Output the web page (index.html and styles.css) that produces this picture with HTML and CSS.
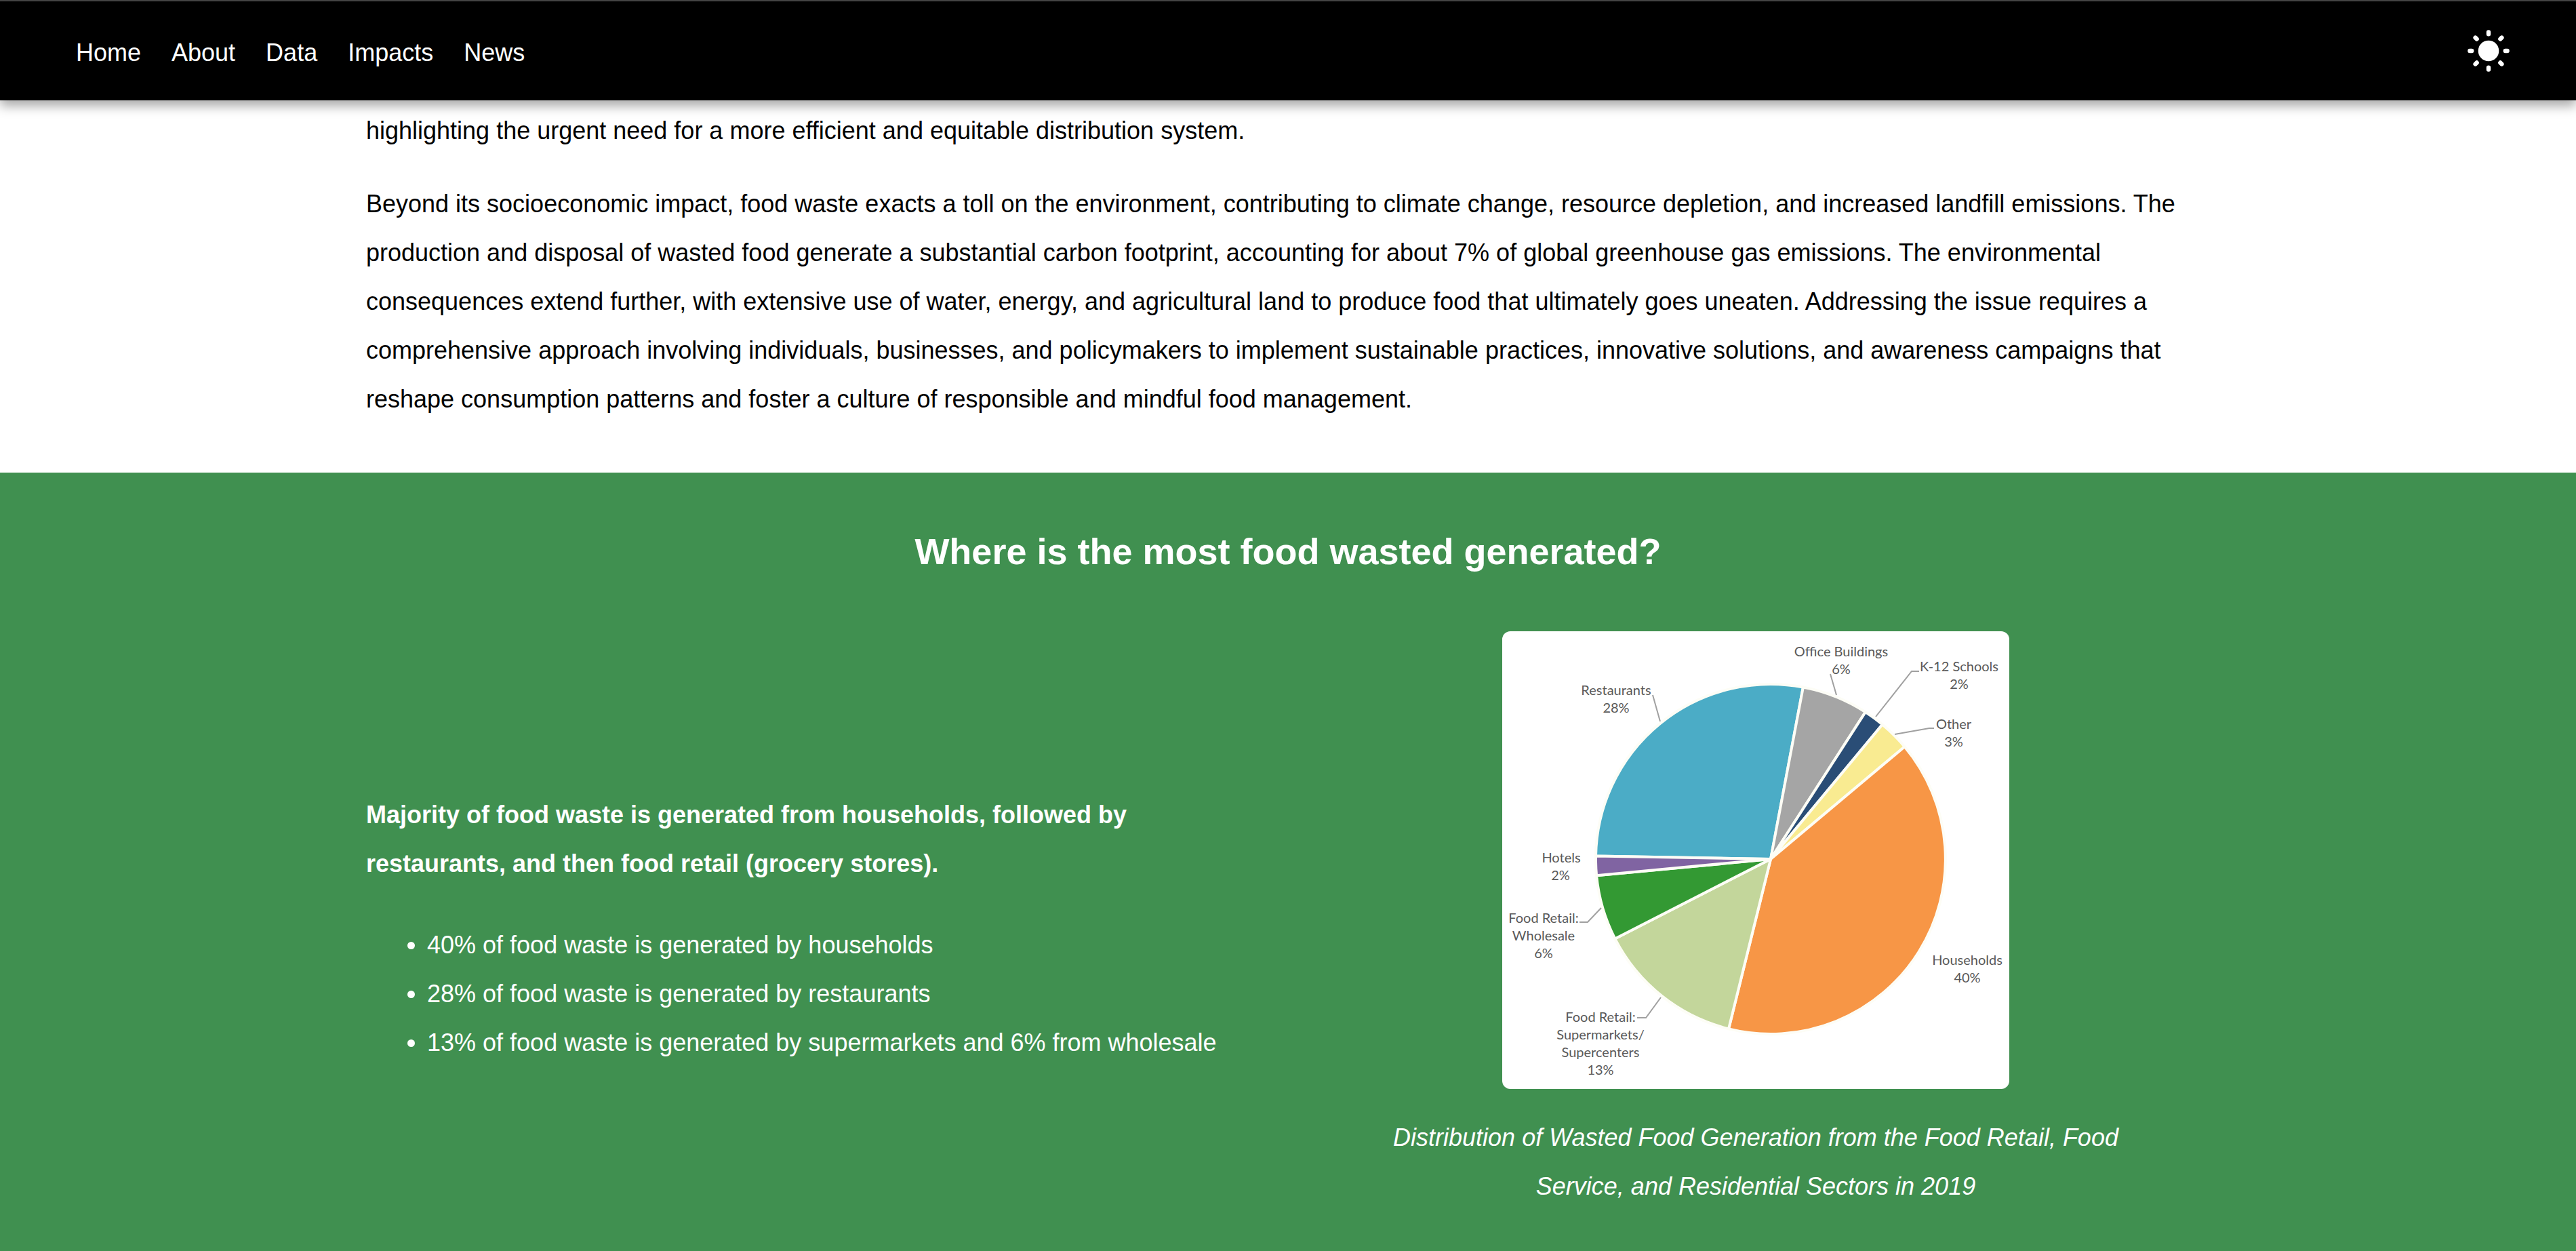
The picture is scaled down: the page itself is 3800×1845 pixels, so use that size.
FILE: index.html
```html
<!DOCTYPE html>
<html lang="en">
<head>
<meta charset="utf-8">
<title>Food Waste</title>
<link rel="stylesheet" href="styles.css">
</head>
<body>
<header class="site-header">
  <nav class="nav">
    <a href="#home">Home</a>
    <a href="#about">About</a>
    <a href="#data">Data</a>
    <a href="#impacts">Impacts</a>
    <a href="#news">News</a>
  </nav>
  <button class="theme-toggle" type="button" aria-label="Toggle theme">
    <svg viewBox="-36 -36 72 72" aria-hidden="true">
      <circle r="15.3" fill="#fff"/>
      <g stroke="#fff" stroke-width="6.4" stroke-linecap="round">
        <path d="M0-24.8V-27.6M0 24.8V27.6M-24.8 0H-27.6M24.8 0H27.6"/>
        <path d="M-17.4-17.4L-19.4-19.4M17.4-17.4L19.4-19.4M-17.4 17.4L-19.4 19.4M17.4 17.4L19.4 19.4"/>
      </g>
    </svg>
  </button>
</header>
<main>
  <section class="about" id="about">
    <p>highlighting the urgent need for a more efficient and equitable distribution system.</p>
    <p>Beyond its socioeconomic impact, food waste exacts a toll on the environment, contributing to climate change, resource depletion, and increased landfill emissions. The production and disposal of wasted food generate a substantial carbon footprint, accounting for about 7% of global greenhouse gas emissions. The environmental consequences extend further, with extensive use of water, energy, and agricultural land to produce food that ultimately goes uneaten. Addressing the issue requires a comprehensive approach involving individuals, businesses, and policymakers to implement sustainable practices, innovative solutions, and awareness campaigns that reshape consumption patterns and foster a culture of responsible and mindful food management.</p>
  </section>
  <section class="data" id="data">
    <h2>Where is the most food wasted generated?</h2>
    <div class="columns">
      <div class="summary">
        <p>Majority of food waste is generated from households, followed by restaurants, and then food retail (grocery stores).</p>
        <ul>
          <li>40% of food waste is generated by households</li>
          <li>28% of food waste is generated by restaurants</li>
          <li>13% of food waste is generated by supermarkets and 6% from wholesale</li>
        </ul>
      </div>
      <figure class="chart">
        <svg viewBox="0 0 748 675" role="img" aria-label="Wasted food by sector">
          <g class="slices">
            <path fill="#4bacc6" d="M396 336L138 331.5A258 258 0 0 1 443.9 82.5Z"/>
            <path fill="#a5a5a5" d="M396 336L443.9 82.5A258 258 0 0 1 535.8 119.1Z"/>
            <path fill="#2a4d76" d="M396 336L535.8 119.1A258 258 0 0 1 560.8 137.5Z"/>
            <path fill="#f9eb91" d="M396 336L560.8 137.5A258 258 0 0 1 593.6 170.2Z"/>
            <path fill="#f79646" d="M396 336L593.6 170.2A258 258 0 0 1 334 586.4Z"/>
            <path fill="#c3d69b" d="M396 336L334 586.4A258 258 0 0 1 166.3 453.5Z"/>
            <path fill="#339933" d="M396 336L166.3 453.5A258 258 0 0 1 139.1 360.3Z"/>
            <path fill="#8064a2" d="M396 336L139.1 360.3A258 258 0 0 1 138 331.5Z"/>
          </g>
          <path class="leaders" d="M222 94L233 133M114 429H126L146 408M199 570H212L234 540M484 63L493 94M615 59H604L551 126M637 143H630L579 152"/>
          <g class="labels">
            <text x="168" y="94">Restaurants</text><text x="168" y="120">28%</text>
            <text x="500" y="37">Office Buildings</text><text x="500" y="63">6%</text>
            <text x="674" y="59">K-12 Schools</text><text x="674" y="85">2%</text>
            <text x="666" y="144">Other</text><text x="666" y="170">3%</text>
            <text x="686" y="492">Households</text><text x="686" y="518">40%</text>
            <text x="87" y="341">Hotels</text><text x="86" y="367">2%</text>
            <text x="61" y="430">Food Retail:</text><text x="61" y="456">Wholesale</text><text x="61" y="482">6%</text>
            <text x="145" y="576">Food Retail:</text><text x="145" y="602">Supermarkets/</text><text x="145" y="628">Supercenters</text><text x="145" y="654">13%</text>
          </g>
        </svg>
        <figcaption>Distribution of Wasted Food Generation from the Food Retail, Food Service, and Residential Sectors in 2019</figcaption>
      </figure>
    </div>
  </section>
</main>
</body>
</html>
```
FILE: styles.css
```css
* { box-sizing: border-box; }

body {
  margin: 0;
  min-height: 100vh;
  display: flex;
  flex-direction: column;
  background: #fff;
  color: #000;
  font: 36px/72px "Liberation Sans", Arial, sans-serif;
}

h2, p, ul, figure { margin: 0; }

.site-header {
  position: sticky;
  top: 0;
  z-index: 1;
  display: flex;
  justify-content: space-between;
  align-items: center;
  height: 148px;
  padding: 6px 93px 0 112px;
  background: #000;
  border-top: 2px solid #444;
  box-shadow: 0 8px 16px rgba(0, 0, 0, 0.35);
}

.nav { display: flex; gap: 45px; }
.nav a { color: #fff; text-decoration: none; }

.theme-toggle {
  width: 72px;
  height: 72px;
  margin-bottom: 6px;
  padding: 0;
  border: 0;
  background: none;
  cursor: pointer;
}
.theme-toggle svg { display: block; width: 100%; }

main { flex: 1; display: flex; flex-direction: column; }

.about {
  display: grid;
  gap: 36px;
  padding: 9px 540px 72px;
}

.data {
  flex: 1;
  padding: 62px 540px 36px;
  background: #409050;
  color: #fff;
}
.data h2 {
  margin-bottom: 64px;
  font-size: 54px;
  line-height: 108px;
  text-align: center;
}

.columns {
  display: grid;
  grid-template-columns: 1fr 1fr;
  gap: 40px;
  align-items: center;
}

.summary { display: grid; gap: 48px; }
.summary p { padding-right: 40px; font-weight: bold; }
.summary ul { padding-left: 90px; }

.chart {
  display: flex;
  flex-direction: column;
  align-items: center;
  gap: 36px;
  padding: 0 80px 22px;
  text-align: center;
  font-style: italic;
}
.chart svg {
  width: 748px;
  max-width: 100%;
  background: #fff;
  border-radius: 12px;
}
.slices { stroke: #fdfdf6; stroke-width: 4; stroke-linejoin: round; }
.leaders { fill: none; stroke: #a0a0a0; stroke-width: 2; }
.labels {
  fill: #595959;
  font: normal 20px Lato, "Open Sans", sans-serif;
  text-anchor: middle;
}
```
